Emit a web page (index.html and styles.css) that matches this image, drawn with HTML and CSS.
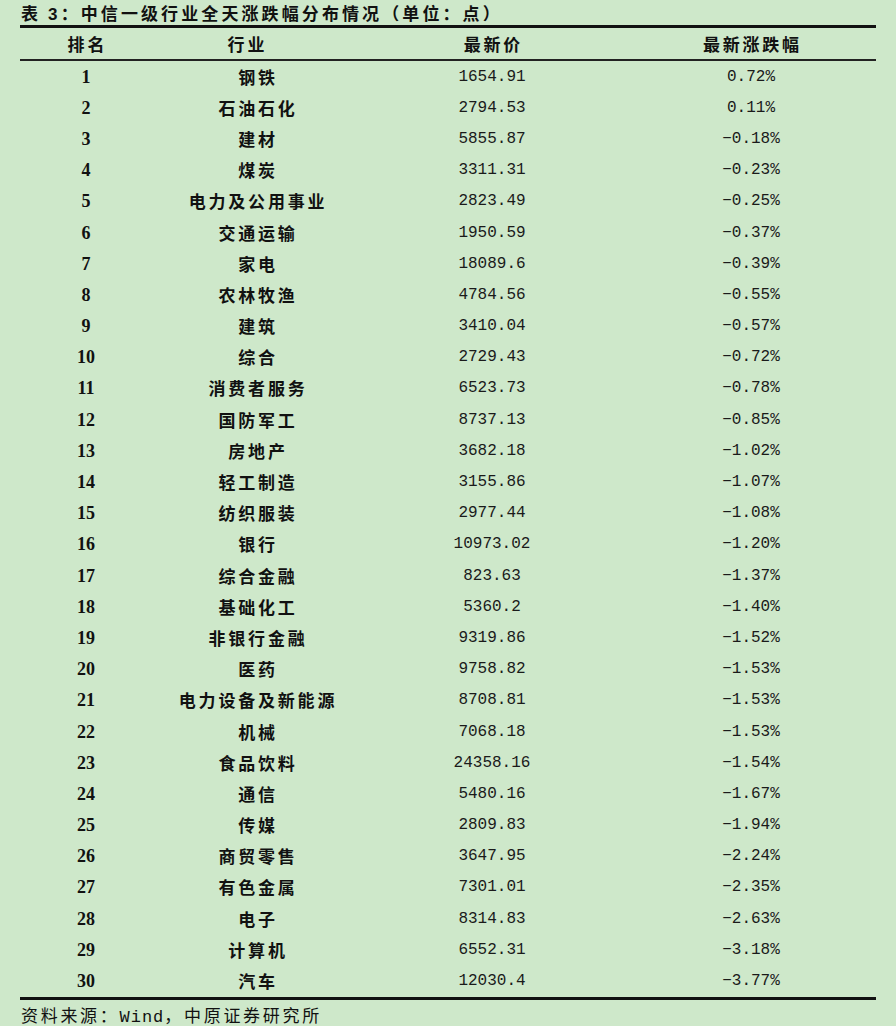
FILE: index.html
```html
<!DOCTYPE html>
<html lang="zh-CN">
<head>
<meta charset="utf-8">
<title>中信一级行业全天涨跌幅分布情况</title>
<link rel="stylesheet" href="styles.css">
</head>
<body>
<div class="page">
  <div class="title">表 <span class="title-num">3</span>：中信一级行业全天涨跌幅分布情况（单位：点）</div>
  <div class="table">
    <div class="row head">
      <div class="c c1">排名</div><div class="c c2">行业</div><div class="c c3">最新价</div><div class="c c4">最新涨跌幅</div>
    </div>
    <div class="body" id="tbody">
      <div class="row"><div class="c c1 n">1</div><div class="c c2">钢铁</div><div class="c c3 m">1654.91</div><div class="c c4 m">0.72%</div></div>
      <div class="row"><div class="c c1 n">2</div><div class="c c2">石油石化</div><div class="c c3 m">2794.53</div><div class="c c4 m">0.11%</div></div>
      <div class="row"><div class="c c1 n">3</div><div class="c c2">建材</div><div class="c c3 m">5855.87</div><div class="c c4 m">−0.18%</div></div>
      <div class="row"><div class="c c1 n">4</div><div class="c c2">煤炭</div><div class="c c3 m">3311.31</div><div class="c c4 m">−0.23%</div></div>
      <div class="row"><div class="c c1 n">5</div><div class="c c2">电力及公用事业</div><div class="c c3 m">2823.49</div><div class="c c4 m">−0.25%</div></div>
      <div class="row"><div class="c c1 n">6</div><div class="c c2">交通运输</div><div class="c c3 m">1950.59</div><div class="c c4 m">−0.37%</div></div>
      <div class="row"><div class="c c1 n">7</div><div class="c c2">家电</div><div class="c c3 m">18089.6</div><div class="c c4 m">−0.39%</div></div>
      <div class="row"><div class="c c1 n">8</div><div class="c c2">农林牧渔</div><div class="c c3 m">4784.56</div><div class="c c4 m">−0.55%</div></div>
      <div class="row"><div class="c c1 n">9</div><div class="c c2">建筑</div><div class="c c3 m">3410.04</div><div class="c c4 m">−0.57%</div></div>
      <div class="row"><div class="c c1 n">10</div><div class="c c2">综合</div><div class="c c3 m">2729.43</div><div class="c c4 m">−0.72%</div></div>
      <div class="row"><div class="c c1 n">11</div><div class="c c2">消费者服务</div><div class="c c3 m">6523.73</div><div class="c c4 m">−0.78%</div></div>
      <div class="row"><div class="c c1 n">12</div><div class="c c2">国防军工</div><div class="c c3 m">8737.13</div><div class="c c4 m">−0.85%</div></div>
      <div class="row"><div class="c c1 n">13</div><div class="c c2">房地产</div><div class="c c3 m">3682.18</div><div class="c c4 m">−1.02%</div></div>
      <div class="row"><div class="c c1 n">14</div><div class="c c2">轻工制造</div><div class="c c3 m">3155.86</div><div class="c c4 m">−1.07%</div></div>
      <div class="row"><div class="c c1 n">15</div><div class="c c2">纺织服装</div><div class="c c3 m">2977.44</div><div class="c c4 m">−1.08%</div></div>
      <div class="row"><div class="c c1 n">16</div><div class="c c2">银行</div><div class="c c3 m">10973.02</div><div class="c c4 m">−1.20%</div></div>
      <div class="row"><div class="c c1 n">17</div><div class="c c2">综合金融</div><div class="c c3 m">823.63</div><div class="c c4 m">−1.37%</div></div>
      <div class="row"><div class="c c1 n">18</div><div class="c c2">基础化工</div><div class="c c3 m">5360.2</div><div class="c c4 m">−1.40%</div></div>
      <div class="row"><div class="c c1 n">19</div><div class="c c2">非银行金融</div><div class="c c3 m">9319.86</div><div class="c c4 m">−1.52%</div></div>
      <div class="row"><div class="c c1 n">20</div><div class="c c2">医药</div><div class="c c3 m">9758.82</div><div class="c c4 m">−1.53%</div></div>
      <div class="row"><div class="c c1 n">21</div><div class="c c2">电力设备及新能源</div><div class="c c3 m">8708.81</div><div class="c c4 m">−1.53%</div></div>
      <div class="row"><div class="c c1 n">22</div><div class="c c2">机械</div><div class="c c3 m">7068.18</div><div class="c c4 m">−1.53%</div></div>
      <div class="row"><div class="c c1 n">23</div><div class="c c2">食品饮料</div><div class="c c3 m">24358.16</div><div class="c c4 m">−1.54%</div></div>
      <div class="row"><div class="c c1 n">24</div><div class="c c2">通信</div><div class="c c3 m">5480.16</div><div class="c c4 m">−1.67%</div></div>
      <div class="row"><div class="c c1 n">25</div><div class="c c2">传媒</div><div class="c c3 m">2809.83</div><div class="c c4 m">−1.94%</div></div>
      <div class="row"><div class="c c1 n">26</div><div class="c c2">商贸零售</div><div class="c c3 m">3647.95</div><div class="c c4 m">−2.24%</div></div>
      <div class="row"><div class="c c1 n">27</div><div class="c c2">有色金属</div><div class="c c3 m">7301.01</div><div class="c c4 m">−2.35%</div></div>
      <div class="row"><div class="c c1 n">28</div><div class="c c2">电子</div><div class="c c3 m">8314.83</div><div class="c c4 m">−2.63%</div></div>
      <div class="row"><div class="c c1 n">29</div><div class="c c2">计算机</div><div class="c c3 m">6552.31</div><div class="c c4 m">−3.18%</div></div>
      <div class="row"><div class="c c1 n">30</div><div class="c c2">汽车</div><div class="c c3 m">12030.4</div><div class="c c4 m">−3.77%</div></div>
    </div>
  </div>
  <div class="source">资料来源：<span class="mono">Wind</span>，中原证券研究所</div>
</div>
</body>
</html>
```

FILE: styles.css
```css
html, body {
  margin: 0;
  padding: 0;
  background: #cee8ca;
}

.page {
  width: 896px;
  height: 1026px;
  background: #cee8ca;
  color: #111;
  font-family: "Noto Sans CJK SC", "Liberation Sans", sans-serif;
  overflow: hidden;
}

.title {
  height: 25px;
  padding-left: 21px;
  font-size: 17px;
  line-height: 25px;
  font-weight: 700;
  letter-spacing: 3.1px;
  white-space: nowrap;
}

.title-num {
  font-family: "Liberation Sans", sans-serif;
}

.table {
  margin-left: 20px;
  width: 856px;
  border-top: 3px solid #111;
  border-bottom: 3px solid #111;
}

.row {
  display: grid;
  grid-template-columns: 132px 188px 304px 232px;
  height: 31.2px;
  align-items: center;
}

.row.head {
  height: 31px;
  border-bottom: 2px solid #222;
}

.c {
  text-align: center;
  white-space: nowrap;
  font-size: 17px;
  line-height: 20px;
}

.c1, .c2, .head .c {
  font-weight: 700;
  letter-spacing: 2.8px;
  padding-left: 2.8px;
}

.c2 {
  padding-left: 24px;
}

.head .c2 {
  padding-left: 2.8px;
}

.c4 {
  padding-right: 18px;
}

.n {
  font-family: "Liberation Serif", serif;
  font-size: 18px;
  letter-spacing: 0;
  padding-left: 0;
  padding-right: 0;
}

.m {
  font-family: "Liberation Mono", monospace;
  font-size: 16px;
  font-weight: 400;
  color: #1a1a1a;
}

.source {
  padding-left: 21px;
  margin-top: 3px;
  font-size: 17px;
  line-height: 24px;
  letter-spacing: 2.7px;
  white-space: nowrap;
}

.source .mono {
  font-family: "Liberation Mono", monospace;
  letter-spacing: 1px;
}
```
